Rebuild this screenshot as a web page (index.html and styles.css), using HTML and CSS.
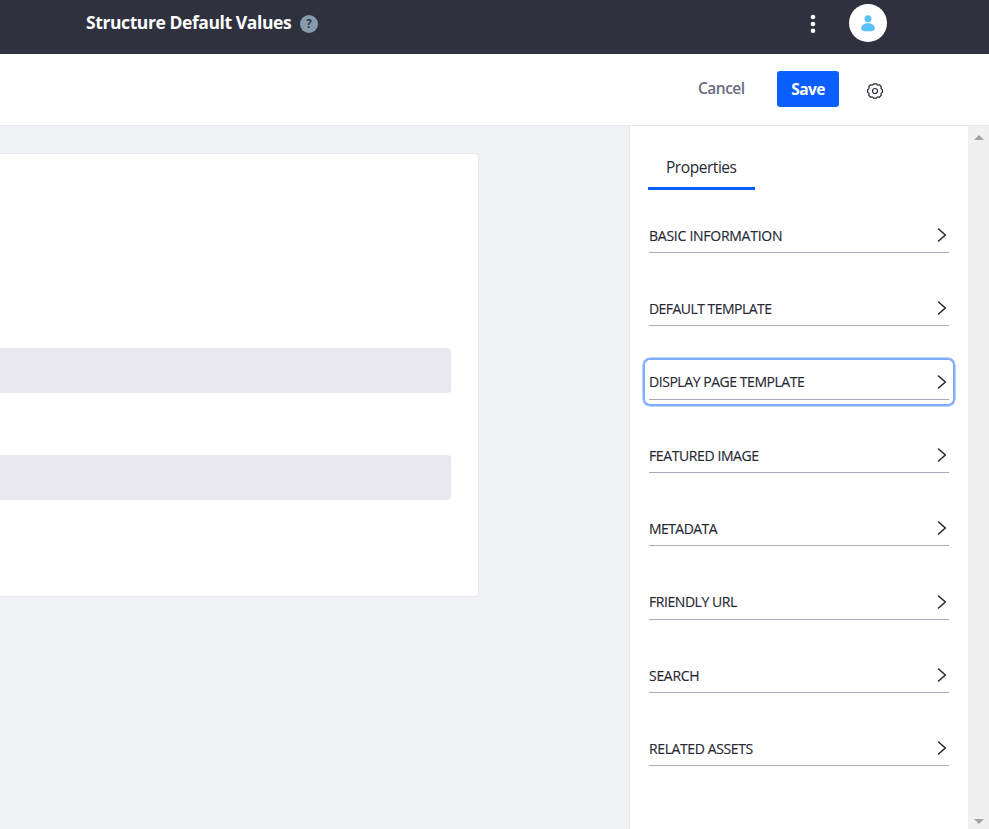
FILE: index.html
```
<!DOCTYPE html>
<html lang="en">
<head>
<meta charset="utf-8">
<title>Structure Default Values</title>
<link rel="stylesheet" href="styles.css">
</head>
<body>
<svg width="0" height="0" class="defs"><symbol id="chevron" viewBox="0 0 10 16"><path d="M1.5 2 8.4 8 1.5 14" fill="none" stroke="currentColor" stroke-width="1.6" stroke-linecap="round" stroke-linejoin="round"/></symbol></svg>
<header class="topbar">
  <h1 class="title">Structure Default Values</h1>
  <span class="help">?</span>
  <svg class="dots" viewBox="0 0 6 20"><circle cx="3" cy="3" r="2.3"/><circle cx="3" cy="10" r="2.3"/><circle cx="3" cy="16.8" r="2.3"/></svg>
  <span class="avatar"><svg width="14" height="17" viewBox="0 0 14 17"><circle cx="7" cy="3.7" r="3.5"/><path d="M0.2 13.2C0.2 10.4 3 8.3 7 8.3s6.8 2.1 6.8 4.9c0 2.2-1.8 3.1-6.8 3.1S.2 15.4.2 13.2z"/></svg></span>
</header>
<div class="toolbar">
  <button class="cancel"><span>Cancel</span></button>
  <button class="save"><span>Save</span></button>
  <svg class="gear" viewBox="-8 -8 16 16"><path d="M7.4-1.5V1.5Q5.2 2.2 6.3 4.25L4.25 6.3Q2.2 5.2 1.5 7.2H-1.5Q-2.2 5.2-4.25 6.3L-6.3 4.25Q-5.2 2.2-7.4 1.5V-1.5Q-5.2-2.2-6.3-4.25L-4.25-6.3Q-2.2-5.2-1.5-7.2H1.5Q2.2-5.2 4.25-6.3L6.3-4.25Q5.2-2.2 7.4-1.5Z"/><circle r="2.5"/></svg>
</div>
<div class="workspace">
  <main class="canvas">
    <section class="sheet"><div class="field"></div><div class="field"></div></section>
  </main>
  <aside class="sidebar">
    <nav class="tabs"><span class="tab"><span class="tab-label">Properties</span></span></nav>
    <div class="panels">
      <div class="panel"><span class="basic">BASIC INFORMATION</span><svg><use href="#chevron"/></svg></div>
      <div class="panel"><span class="default">DEFAULT TEMPLATE</span><svg><use href="#chevron"/></svg></div>
      <div class="panel focused"><span class="display">DISPLAY PAGE TEMPLATE</span><svg><use href="#chevron"/></svg></div>
      <div class="panel"><span class="featured">FEATURED IMAGE</span><svg><use href="#chevron"/></svg></div>
      <div class="panel"><span class="metadata">METADATA</span><svg><use href="#chevron"/></svg></div>
      <div class="panel"><span class="friendly">FRIENDLY URL</span><svg><use href="#chevron"/></svg></div>
      <div class="panel"><span class="search">SEARCH</span><svg><use href="#chevron"/></svg></div>
      <div class="panel"><span class="related">RELATED ASSETS</span><svg><use href="#chevron"/></svg></div>
    </div>
  </aside>
  <div class="scrollbar"><i class="up"></i><i class="down"></i></div>
</div>
</body>
</html>
```
FILE: styles.css
```
* { box-sizing: border-box; }
body { margin: 0; height: 829px; overflow: hidden; display: flex; flex-direction: column; background: #fff; color: #272833; font-family: "Open Sans", "Noto Sans", sans-serif; }
.defs { display: block; flex: none; height: 0; }
.topbar { height: 54px; flex: none; background: #30313f; display: flex; align-items: center; padding: 0 102px 8px 86px; }
.title { margin: -2px 0 0; width: 206px; font-size: 17.5px; line-height: 24px; font-weight: 700; letter-spacing: -0.41px; color: #fff; white-space: nowrap; }
.help { width: 18px; height: 18px; margin: 2px 0 0 8px; border-radius: 50%; background: #869cad; color: #30313f; font-size: 11.5px; line-height: 18px; font-weight: 700; text-align: center; }
.dots { width: 6px; height: 20px; margin: 2px 33px 0 auto; fill: #fff; }
.avatar { width: 38px; height: 38px; border-radius: 50%; background: #fff; display: flex; align-items: center; justify-content: center; fill: #5ac3ff; }
.toolbar { height: 72px; flex: none; border-bottom: 1px solid #e7e7ed; display: flex; align-items: center; justify-content: flex-end; padding: 0 106px 1px 0; }
button { border: 0; background: none; padding: 0; font: 600 15.5px/24px "Open Sans", sans-serif; white-space: nowrap; }
.cancel { width: 47px; margin: -2px 32px 0 0; color: #6b6c7e; text-align: left; letter-spacing: -0.5px; }
.save { width: 62px; height: 36px; border-radius: 3px; background: #0b5fff; color: #fff; font-weight: 700; letter-spacing: -0.6px; }
.gear { width: 16px; height: 16px; margin: 3px 0 0 28px; fill: none; stroke: #272833; stroke-width: 1.2; stroke-linejoin: round; }
.workspace { flex: 1; display: flex; min-height: 0; }
.canvas { width: 629px; background: #f0f1f5; padding-top: 27px; }
.sheet { width: 479px; height: 444px; background: #fff; border: 1px solid #e7e7ed; border-left: 0; border-radius: 0 4px 4px 0; padding: 194px 27px 0 0; }
.field { height: 45px; margin-bottom: 62px; background: #e7e7ed; border-radius: 0 4px 4px 0; }
.sidebar { width: 339px; border-left: 1px solid #e7e7ed; padding: 20px 19px 0 18px; }
.tabs { display: flex; }
.tab { width: 107px; height: 44px; border-bottom: 3px solid #0b5fff; padding: 9px 0 0 18px; font-size: 15.5px; line-height: 24px; letter-spacing: -0.45px; }
.panels { padding: 27px 0 0 1px; display: flex; flex-direction: column; gap: 37.33px; }
.panel { height: 36px; flex: none; border-bottom: 1px solid #a7a9bc; display: flex; justify-content: space-between; padding: 7.8px 2px 0 0; font-size: 14px; line-height: 22px; white-space: nowrap; -webkit-text-stroke: .15px #272833; }
.basic { letter-spacing: -0.26px; }
.default { letter-spacing: -0.54px; }
.display { letter-spacing: -0.45px; }
.featured { letter-spacing: -0.4px; }
.metadata { letter-spacing: -0.57px; }
.friendly { letter-spacing: -0.44px; }
.search { letter-spacing: -0.3px; }
.related { letter-spacing: -0.39px; }
.panel svg { width: 10px; height: 16px; margin-top: 2.2px; }
.focused { position: relative; }
.focused::after { content: ""; position: absolute; inset: -6px -6px -7px; border: 2px solid #80acff; border-radius: 7px; box-shadow: 0 0 0 .5px #80acff; }
.scrollbar { flex: 1; background: #f0f0f0; display: flex; flex-direction: column; justify-content: space-between; align-items: center; padding: 9px 0 5px; }
.up, .down { border: 5px solid transparent; border-top-width: 0; border-bottom-color: #a3a3a3; }
.down { border-width: 5px 5px 0; border-top-color: #a3a3a3; }
```
